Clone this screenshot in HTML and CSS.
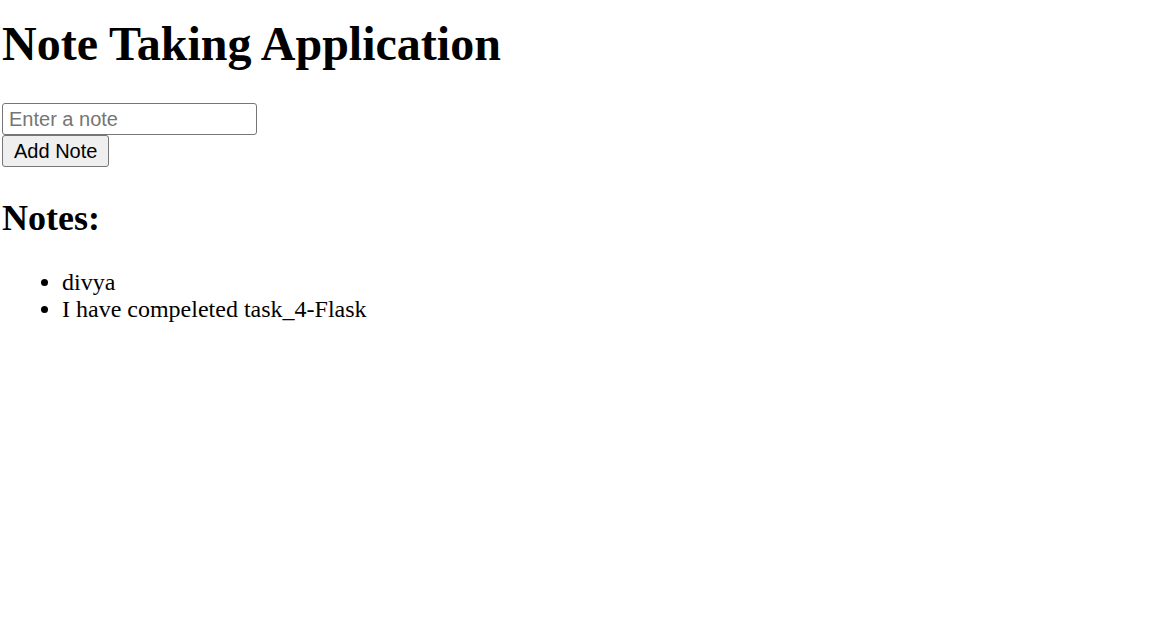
FILE: index.html
```html
<!DOCTYPE html>
<html>
<head>
<meta charset="utf-8">
<title>Note Taking Application</title>
<link rel="stylesheet" href="styles.css">
</head>
<body>
<h1 class="title">Note Taking Application</h1>
<form class="note-form">
  <input class="note-input" type="text" placeholder="Enter a note">
  <button class="note-button" type="button">Add Note</button>
</form>
<h2 class="subtitle">Notes:</h2>
<ul class="note-list">
  <li>divya</li>
  <li>I have compeleted task_4-Flask</li>
</ul>
</body>
</html>
```

FILE: styles.css
```css
html, body {
  background: #fff;
}
body {
  margin: 0;
  padding: 0 0 0 2px;
  font-family: "Liberation Serif", "Times New Roman", serif;
  font-size: 24px;
  color: #000;
}
.title {
  font-size: 48px;
  font-weight: bold;
  margin: 16px 0 32px 0;
  line-height: normal;
}
.note-form {
  display: flex;
  flex-direction: column;
  align-items: flex-start;
  gap: 0;
  margin: 0;
}
.note-input {
  box-sizing: border-box;
  width: 255px;
  height: 32px;
  margin: 0;
  padding: 0 6px;
  border: 1px solid #767676;
  border-radius: 3px;
  font-family: "Liberation Sans", Arial, sans-serif;
  font-size: 20px;
  color: #000;
  background: #fff;
}
.note-input::placeholder {
  color: #757575;
}
.note-button {
  box-sizing: border-box;
  height: 32px;
  margin: 0;
  padding: 0 11px;
  border: 1px solid #767676;
  border-radius: 3px;
  background: #efefef;
  font-family: "Liberation Sans", Arial, sans-serif;
  font-size: 20px;
  color: #000;
}
.subtitle {
  font-size: 36px;
  font-weight: bold;
  margin: 30px 0 30px 0;
  line-height: normal;
}
.note-list {
  margin: 0;
  padding-left: 60px;
  line-height: 27px;
}
```
